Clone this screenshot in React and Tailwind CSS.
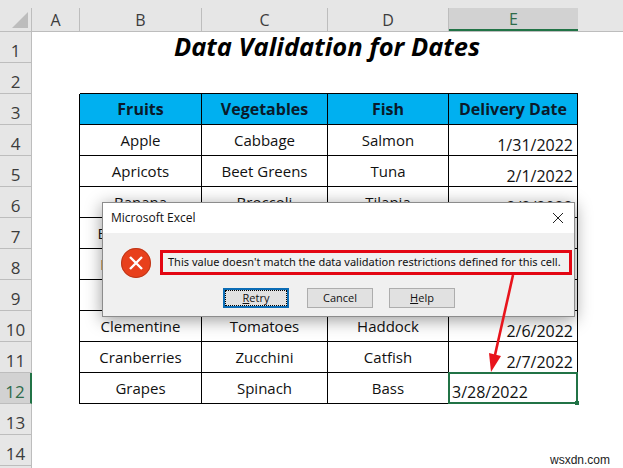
const rows = [
  ['Apple', 'Cabbage', 'Salmon', '1/31/2022'],
  ['Apricots', 'Beet Greens', 'Tuna', '2/1/2022'],
  ['Banana', 'Broccoli', 'Tilapia', '2/2/2022'],
  ['Blackberries', '', '', ''],
  ['Blueberries', '', '', ''],
  ['', '', '', ''],
  ['Clementine', 'Tomatoes', 'Haddock', '2/6/2022'],
  ['Cranberries', 'Zucchini', 'Catfish', '2/7/2022'],
  ['Grapes', 'Spinach', 'Bass', '3/28/2022'],
];

const gridCols = 'grid grid-cols-[32px_48px_122px_126px_121px_129px_45px]';
const colLetters = ['A', 'B', 'C', 'D', 'E'];

const RowLabel = ({ n, selected }) => (
  <div
    className={`flex items-center justify-center pt-[7px] text-[17px] leading-[22px] border-b border-b-[#bdbdbd] border-r ${
      selected ? 'bg-[#d2d2d2] text-[#2f6b4a] border-r-2 border-r-[#217346]' : 'bg-[#e6e6e6] text-[#3c3c3c] border-r-[#bdbdbd]'
    }`}
  >
    {n}
  </div>
);

const DataRow = ({ n, row }) => {
  const selected = n === 12;
  return (
    <div className={`${gridCols} h-[31px]`}>
      <RowLabel n={n} selected={selected} />
      <div className="border-r border-black" />
      {row.slice(0, 3).map((text, i) => (
        <div key={i} className="flex items-center justify-center border-r border-b border-black text-[15px] text-[#111]">
          {text}
        </div>
      ))}
      {selected ? (
        <div className="relative flex items-end border-r border-b border-black pl-[3px] text-[16px] leading-[22px] text-[#111]">
          {row[3]}
          <div className="absolute -top-px -left-px -right-px -bottom-px border-2 border-[#217346]" />
          <div className="absolute -right-[2px] -bottom-[2px] h-[4px] w-[4px] bg-[#217346]" />
        </div>
      ) : (
        <div className="flex items-end justify-end border-r border-b border-black pr-[4px] text-[16px] leading-[20px] text-[#111]">
          {row[3]}
        </div>
      )}
      <div />
    </div>
  );
};

const DialogButton = ({ first, children }) => (
  <button
    className={`relative flex h-[20px] w-[66px] items-center justify-center bg-[#e1e1e1] text-[11px] text-[#111] border ${
      first ? 'border-2 border-[#0b6cb5]' : 'border-[#adadad]'
    }`}
  >
    {first && <span className="absolute inset-0 border border-dotted border-black" />}
    {children}
  </button>
);

const Dialog = () => (
  <div className="absolute left-[102px] top-[202px] flex h-[115px] w-[473px] flex-col border border-[#8c8c8c] bg-[#f0f0f0] shadow-[0_3px_16px_rgba(0,0,0,0.4)]">
    <div className="flex h-[30px] items-center justify-between bg-white pl-[8px] pr-[10px] text-[12px] text-[#111]">
      <span>Microsoft Excel</span>
      <svg width="12" height="12" viewBox="0 0 12 12" stroke="#222" strokeWidth="1">
        <path d="M1 1l10 10M11 1L1 11" />
      </svg>
    </div>
    <div className="flex h-[25px] items-center mt-[17px] pl-[18px]">
      <svg width="30" height="30" viewBox="0 0 30 30" className="shrink-0">
        <circle cx="15" cy="15" r="15" fill="#e8401c" />
        <circle cx="15" cy="15" r="14.5" fill="none" stroke="#b9391c" strokeWidth="1" />
        <path d="M9 9l12 12M21 9L9 21" stroke="#fff" strokeWidth="2.4" />
      </svg>
      <div className="ml-[9px] flex h-[25px] w-[412px] items-center border-[3px] border-[#e30613] pl-[5px] text-[11px] whitespace-nowrap text-[#111] font-['Noto_Sans',sans-serif]">
        This value doesn't match the data validation restrictions defined for this cell.
      </div>
    </div>
    <div className="mt-[13px] flex pl-[120px]">
      <DialogButton first>
        <span><u>R</u>etry</span>
      </DialogButton>
      <div className="ml-[18px]">
        <DialogButton>Cancel</DialogButton>
      </div>
      <div className="ml-[16px]">
        <DialogButton>
          <span><u>H</u>elp</span>
        </DialogButton>
      </div>
    </div>
  </div>
);

const Arrow = () => (
  <svg className="absolute left-0 top-0" width="623" height="468" viewBox="0 0 623 468">
    <path d="M513 275L495 355" stroke="#e8141c" strokeWidth="2.6" fill="none" />
    <path d="M491 372L489 353L501 356Z" fill="#e8141c" />
  </svg>
);

export default function App() {
  return (
    <div className="relative h-[468px] w-[623px] overflow-hidden bg-white font-['Open_Sans',sans-serif]">
      {/* Column headers */}
      <div className="h-2 bg-[#e6e6e6]" />
      <div className={`${gridCols} h-[24px] grid-rows-[23px] bg-[#e6e6e6] border-b border-[#bdbdbd]`}>
        <div className="flex items-center justify-center border-r border-[#bdbdbd]">
          <svg width="31" height="23" viewBox="0 0 31 23">
            <path d="M12 20L28 4V20Z" fill="#bdbdbd" />
          </svg>
        </div>
        {colLetters.map((c) => (
          <div
            key={c}
            className={`flex items-center justify-center text-[16px] leading-[20px] ${
              c === 'E' ? 'bg-[#d2d2d2] text-[#2f6b4a] border-b-2 border-[#217346]' : 'border-r border-[#bdbdbd] text-[#3c3c3c]'
            }`}
          >
            {c}
          </div>
        ))}
        <div />
      </div>

      {/* Title row */}
      <div className={`${gridCols} h-[31px]`}>
        <RowLabel n={1} />
        <div />
        <div className="col-span-4 flex items-start justify-center pr-[4px] text-[25.5px] leading-[29px] font-bold italic text-black whitespace-nowrap">
          Data Validation for Dates
        </div>
      </div>

      {/* Blank row 2 closes over the table top */}
      <div className={`${gridCols} h-[31px]`}>
        <RowLabel n={2} />
        <div />
        <div className="col-span-4 border-b border-black" />
      </div>

      {/* Table header */}
      <div className={`${gridCols} h-[31px]`}>
        <RowLabel n={3} />
        <div className="border-r border-black" />
        {['Fruits', 'Vegetables', 'Fish', 'Delivery Date'].map((h) => (
          <div key={h} className="flex items-center justify-center border-r border-b border-black bg-[#00b0f0] text-[16px] font-bold text-[#0a1a2a]">
            {h}
          </div>
        ))}
      </div>

      {rows.map((row, i) => (
        <DataRow key={i} n={i + 4} row={row} />
      ))}

      <div className={`${gridCols} h-[31px]`}>
        <RowLabel n={13} />
      </div>
      <div className={`${gridCols} h-[31px]`}>
        <RowLabel n={14} />
      </div>
      <div className="h-[3px] w-[32px] bg-[#e6e6e6] border-r border-[#bdbdbd]" />

      <Dialog />
      <Arrow />

      <span className="absolute left-[550px] top-[451px] text-[12px] text-[#222] font-['Liberation_Sans',sans-serif]">wsxdn.com</span>
    </div>
  );
}
